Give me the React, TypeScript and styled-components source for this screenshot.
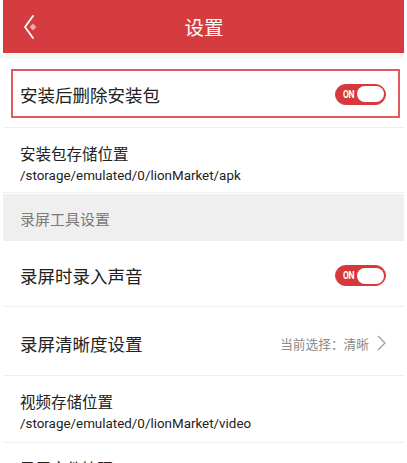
import React from "react";
import styled, { createGlobalStyle } from "styled-components";

const Global = createGlobalStyle`
  html, body { margin: 0; padding: 0; background: #ffffff; }
  body { font-family: Roboto, "Noto Sans CJK SC", sans-serif; }
`;

const Page = styled.div`
  width: 401px;
  margin: 0 3px;
  height: 463px;
  overflow: hidden;
  background: #ffffff;
`;

const Header = styled.div`
  height: 53px;
  background: #d43c3f;
  display: flex;
  align-items: center;
  justify-content: center;
  position: relative;
`;

const BackButton = styled.div`
  position: absolute;
  left: 18px;
  top: 14px;
  width: 22px;
  height: 26px;
  display: flex;
  align-items: center;
  justify-content: center;
`;

const Title = styled.div`
  color: #ffffff;
  font-family: "Noto Sans CJK SC", sans-serif;
  font-size: 19.5px;
  margin-left: 1px;
`;

const TopBand = styled.div`
  height: 5px;
  margin-top: 1px;
  background: #f7f7f7;
`;

const HighlightWrap = styled.div`
  padding: 10px 4px 9px 8px;
  border-bottom: 1px solid #efefef;
`;

const HighlightBox = styled.div`
  height: 49px;
  box-sizing: border-box;
  border: 2px solid #e4575a;
  display: flex;
  align-items: center;
  justify-content: space-between;
  padding: 1px 12px 0 7px;
`;

const Row = styled.div<{ $h: number }>`
  height: ${(p) => p.$h}px;
  display: flex;
  align-items: center;
  justify-content: space-between;
  padding: 4px 18px 0 17px;
  border-bottom: 1px solid #efefef;
  box-sizing: border-box;
`;

const Label = styled.div`
  font-family: "Noto Sans CJK SC", sans-serif;
  font-size: 17.5px;
  color: #222222;
`;

const PathRow = styled.div<{ $h: number }>`
  height: ${(p) => p.$h}px;
  display: flex;
  flex-direction: column;
  justify-content: flex-start;
  padding: 14px 17px 0;
  border-bottom: 1px solid #efefef;
  box-sizing: border-box;
`;

const PathTitle = styled.div`
  font-family: "Noto Sans CJK SC", sans-serif;
  font-size: 15.5px;
  line-height: 23px;
  color: #222222;
`;

const PathValue = styled.div`
  font-family: Roboto, sans-serif;
  font-size: 13.4px;
  line-height: 22px;
  color: #222222;
`;

const Section = styled.div`
  height: 47px;
  background: #efefef;
  display: flex;
  align-items: center;
  padding: 1px 17px 0;
  margin-top: 1px;
  box-sizing: border-box;
  font-family: "Noto Sans CJK SC", sans-serif;
  font-size: 15px;
  color: #7a7a7a;
`;

const Toggle = styled.div`
  width: 51px;
  height: 21px;
  border-radius: 11px;
  background: #d6383c;
  border: 1.5px solid #d6383c;
  box-sizing: border-box;
  display: flex;
  align-items: center;
  justify-content: space-between;
  padding: 0 1px 0 7px;
`;

const ToggleText = styled.span`
  color: #ffffff;
  font-family: Roboto, sans-serif;
  font-weight: 700;
  font-size: 10px;
  letter-spacing: -0.3px;
  transform: scaleX(0.85);
  transform-origin: left center;
`;

const Knob = styled.div`
  width: 27px;
  height: 16px;
  border-radius: 9px;
  background: #ffffff;
`;

const Right = styled.div`
  display: flex;
  align-items: center;
  gap: 8px;
`;

const Hint = styled.div`
  font-family: "Noto Sans CJK SC", sans-serif;
  font-size: 12.7px;
  color: #8a8a8a;
`;

const Switch = () => (
  <Toggle>
    <ToggleText>ON</ToggleText>
    <Knob />
  </Toggle>
);

export default function App() {
  return (
    <>
      <Global />
      <Page>
        <Header>
          <BackButton>
            <svg width="22" height="26" viewBox="0 0 22 26">
              <polyline
                points="12,2 4,13 12,24"
                fill="none"
                stroke="#ffffff"
                strokeWidth="1.8"
                strokeLinecap="round"
                strokeLinejoin="round"
              />
              <polygon points="12,9.5 15.5,13 12,16.5 8.5,13" fill="#f3a3a5" />
            </svg>
          </BackButton>
          <Title>设置</Title>
        </Header>
        <TopBand />
        <HighlightWrap>
          <HighlightBox>
            <Label>安装后删除安装包</Label>
            <Switch />
          </HighlightBox>
        </HighlightWrap>
        <PathRow $h={65}>
          <PathTitle>安装包存储位置</PathTitle>
          <PathValue>/storage/emulated/0/lionMarket/apk</PathValue>
        </PathRow>
        <Section>录屏工具设置</Section>
        <Row $h={66}>
          <Label>录屏时录入声音</Label>
          <Switch />
        </Row>
        <Row $h={69}>
          <Label>录屏清晰度设置</Label>
          <Right>
            <Hint>当前选择：清晰</Hint>
            <svg width="9" height="16" viewBox="0 0 9 16">
              <polyline
                points="1,1 8,8 1,15"
                fill="none"
                stroke="#9a9a9a"
                strokeWidth="1.2"
              />
            </svg>
          </Right>
        </Row>
        <PathRow $h={67}>
          <PathTitle>视频存储位置</PathTitle>
          <PathValue>/storage/emulated/0/lionMarket/video</PathValue>
        </PathRow>
        <PathRow $h={60}>
          <PathTitle>录屏文件管理</PathTitle>
        </PathRow>
      </Page>
    </>
  );
}
